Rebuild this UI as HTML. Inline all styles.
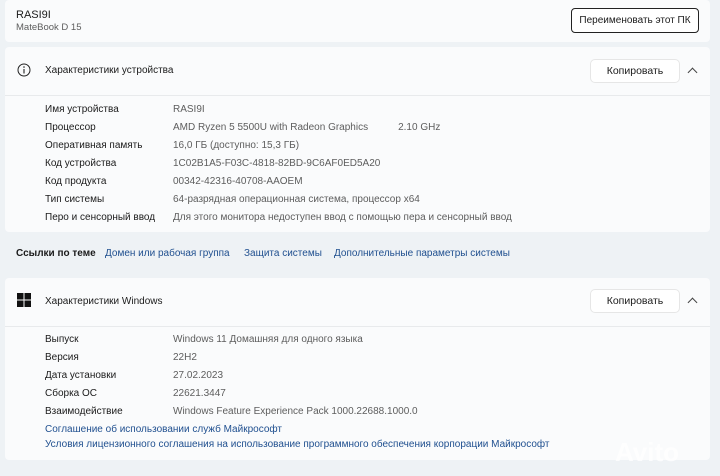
<!DOCTYPE html>
<html><head><meta charset="utf-8"><style>
*{margin:0;padding:0;box-sizing:border-box}
body{width:720px;height:476px;background:#eef2f5;font-family:"Segoe UI","Liberation Sans",sans-serif;font-size:10px;color:#1b1b1b;position:relative;overflow:hidden}
.card{position:absolute;left:5px;width:705px;background:#fafbfc;border-radius:4px}
.a{position:absolute;white-space:nowrap}
.g{color:#5d5d5d}
.l{color:#1f4f8f}
.btn{position:absolute;background:#fff;border-radius:4px;box-shadow:0 0 0 1px #e6e6e6;text-align:center;font-size:10.5px}
.hr{position:absolute;left:0;right:0;height:1px;background:#e8eaec}
.chev{position:absolute;width:7px;height:7px;border-left:1.2px solid #444;border-top:1.2px solid #444;transform:rotate(45deg)}
</style></head><body>
<div class="card" style="top:0;height:42px">
 <div class="a" style="left:11px;top:9px;font-size:11px">RASI9I</div>
 <div class="a g" style="left:11px;top:22px;font-size:9.5px">MateBook D 15</div>
</div>
<div class="btn" style="left:571px;top:8px;width:128px;height:25px;line-height:23px;border:1.5px solid #222;box-shadow:none;font-size:10px">Переименовать этот ПК</div>

<div class="card" style="top:47px;height:185px">
 <svg class="a" style="left:12px;top:16px" width="14" height="14" viewBox="0 0 14 14"><circle cx="7" cy="7" r="6" fill="none" stroke="#222" stroke-width="1"/><line x1="7" y1="6" x2="7" y2="10.5" stroke="#222" stroke-width="1.1"/><circle cx="7" cy="4" r=".8" fill="#222"/></svg>
 <div class="a" style="left:40px;top:18px">Характеристики устройства</div>
 <div class="btn" style="left:586px;top:13px;width:88px;height:22px;line-height:22px">Копировать</div>
 <div class="chev" style="left:684px;top:22px"></div>
 <div class="hr" style="top:48px"></div>
 <div class="a" style="left:40px;top:54px;line-height:18px">Имя устройства<br>Процессор<br>Оперативная память<br>Код устройства<br>Код продукта<br>Тип системы<br>Перо и сенсорный ввод</div>
 <div class="a g" style="left:168px;top:54px;line-height:18px">RASI9I<br>AMD Ryzen 5 5500U with Radeon Graphics<span style="margin-left:30px">2.10 GHz</span><br>16,0 ГБ (доступно: 15,3 ГБ)<br>1C02B1A5-F03C-4818-82BD-9C6AF0ED5A20<br>00342-42316-40708-AAOEM<br>64-разрядная операционная система, процессор x64<br>Для этого монитора недоступен ввод с помощью пера и сенсорный ввод</div>
</div>

<div class="a" style="left:16px;top:248px;font-weight:bold">Ссылки по теме</div>
<div class="a l" style="left:105px;top:248px">Домен или рабочая группа</div>
<div class="a l" style="left:244px;top:248px">Защита системы</div>
<div class="a l" style="left:334px;top:248px">Дополнительные параметры системы</div>

<div class="card" style="top:278px;height:182px">
 <svg class="a" style="left:12px;top:15px" width="14" height="14" viewBox="0 0 14 14"><rect x="0" y="0" width="6.5" height="6.5" fill="#111"/><rect x="7.5" y="0" width="6.5" height="6.5" fill="#111"/><rect x="0" y="7.5" width="6.5" height="6.5" fill="#111"/><rect x="7.5" y="7.5" width="6.5" height="6.5" fill="#111"/></svg>
 <div class="a" style="left:40px;top:18px">Характеристики Windows</div>
 <div class="btn" style="left:586px;top:12px;width:88px;height:22px;line-height:22px">Копировать</div>
 <div class="chev" style="left:684px;top:21px"></div>
 <div class="hr" style="top:48px"></div>
 <div class="a" style="left:40px;top:53px;line-height:18px">Выпуск<br>Версия<br>Дата установки<br>Сборка ОС<br>Взаимодействие</div>
 <div class="a g" style="left:168px;top:53px;line-height:18px">Windows 11 Домашняя для одного языка<br>22H2<br>27.02.2023<br>22621.3447<br>Windows Feature Experience Pack 1000.22688.1000.0</div>
 <div class="a l" style="left:40px;top:144px;line-height:15px">Соглашение об использовании служб Майкрософт<br>Условия лицензионного соглашения на использование программного обеспечения корпорации Майкрософт</div>
</div>
<div class="a" style="left:615px;top:437px;font-size:26px;font-weight:bold;color:rgba(255,255,255,.75)">Avito</div>
</body></html>
